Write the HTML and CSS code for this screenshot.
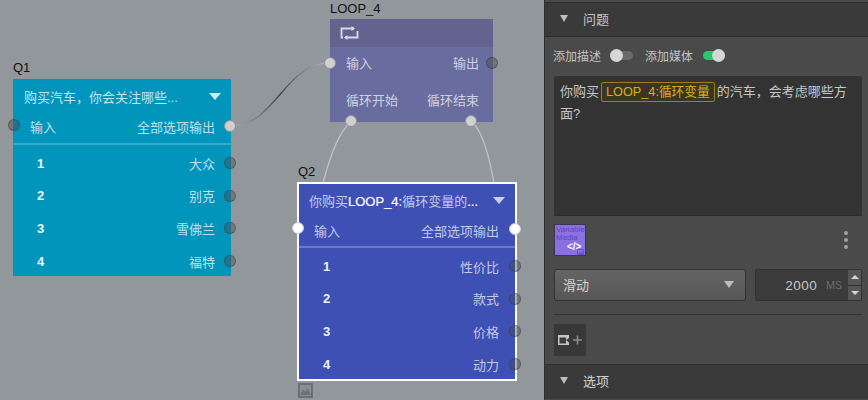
FILE: index.html
```html
<!DOCTYPE html>
<html lang="zh">
<head>
<meta charset="utf-8">
<title>Flow editor</title>
<link rel="stylesheet" href="styles.css">
</head>
<body>
<div class="app">
  <main class="canvas">
    <svg class="wires" width="544" height="400" viewBox="0 0 544 400">
      <defs>
        <linearGradient id="wg" gradientUnits="userSpaceOnUse" x1="230" y1="126" x2="330" y2="63">
          <stop offset="0" stop-color="#a9adb0"/>
          <stop offset="0.5" stop-color="#3f434c"/>
          <stop offset="1" stop-color="#b4b7ba"/>
        </linearGradient>
      </defs>
      <path d="M230 126C276 126 284 63 330 63" fill="none" stroke="url(#wg)" stroke-width="1.3"/>
      <path d="M351 122C338 132 329 160 323 183" fill="none" stroke="#c3c6c8" stroke-width="1.2"/>
      <path d="M471 122C482 128 490 160 494 183" fill="none" stroke="#c3c6c8" stroke-width="1.2"/>
    </svg>

    <section class="node node-q1">
      <div class="node-name">Q1</div>
      <div class="q-body q1-body">
        <div class="q-head"><span class="q-title">购买汽车，你会关注哪些...</span><span class="tri tri-head"></span></div>
        <div class="q-io"><span>输入</span><span>全部选项输出</span></div>
        <ul class="q-list">
          <li><b>1</b><span>大众</span><i class="port dim port-opt"></i></li>
          <li><b>2</b><span>别克</span><i class="port dim port-opt"></i></li>
          <li><b>3</b><span>雪佛兰</span><i class="port dim port-opt"></i></li>
          <li><b>4</b><span>福特</span><i class="port dim port-opt"></i></li>
        </ul>
        <i class="port dim port-in"></i>
        <i class="port light port-out"></i>
      </div>
    </section>

    <section class="node node-loop">
      <div class="node-name">LOOP_4</div>
      <div class="loop-body">
        <div class="loop-head">
          <svg width="19" height="14" viewBox="0 0 19 14" fill="none" stroke="#d9dbe6" stroke-width="1.8">
            <path d="M1.5 9V2.5H14"/><path d="M11.5 0 15 2.5 11.5 5" fill="#d9dbe6" stroke="none"/>
            <path d="M17.5 5v6.5H5"/><path d="M7.5 9 4 11.5 7.5 14" fill="#d9dbe6" stroke="none"/>
            <path d="M1.5 9v2.5H3"/>
          </svg>
        </div>
        <div class="loop-row"><span>输入</span><span>输出</span></div>
        <div class="loop-row loop-row-2"><span>循环开始</span><span>循环结束</span></div>
        <i class="port light lp-in"></i>
        <i class="port dim lp-out"></i>
        <i class="port light lp-start"></i>
        <i class="port light lp-end"></i>
      </div>
    </section>

    <section class="node node-q2">
      <div class="node-name">Q2</div>
      <div class="q-body q2-body">
        <div class="q-head"><span class="q-title">你购买<strong>LOOP_4:</strong>循环变量的<strong>...</strong></span><span class="tri tri-head"></span></div>
        <div class="q-io"><span>输入</span><span>全部选项输出</span></div>
        <ul class="q-list">
          <li><b>1</b><span>性价比</span><i class="port dim port-opt"></i></li>
          <li><b>2</b><span>款式</span><i class="port dim port-opt"></i></li>
          <li><b>3</b><span>价格</span><i class="port dim port-opt"></i></li>
          <li><b>4</b><span>动力</span><i class="port dim port-opt"></i></li>
        </ul>
        <i class="port white port-in"></i>
        <i class="port white port-out"></i>
      </div>
      <div class="media-badge">
        <svg width="11" height="9" viewBox="0 0 11 9"><path d="M0 9 3.5 3.5 5.5 6 7.5 2 11 9Z" fill="#6d7074"/></svg>
      </div>
    </section>
  </main>

  <aside class="panel">
    <header class="sec-head sec-top"><span class="tri tri-sec"></span><span>问题</span></header>
    <div class="sec-body">
      <div class="toggles">
        <span>添加描述</span><span class="switch off"><i></i></span>
        <span>添加媒体</span><span class="switch on"><i></i></span>
      </div>
      <div class="editor"><span>你购买</span><span class="token">LOOP_4:循环变量</span><span>的汽车，会考虑哪些方</span><br><span>面?</span></div>
      <div class="media-row">
        <div class="thumb">
          <span class="thumb-text">Variable<br>Media</span>
          <svg class="thumb-img" width="7" height="6" viewBox="0 0 7 6"><path d="M.5.5h6v5h-6Z" fill="none" stroke="#6a4fc8"/><path d="M1 5 3 2.500l1 1.500L5.500 2 6 5Z" fill="#6a4fc8"/></svg>
          <span class="thumb-code">&lt;/&gt;</span>
        </div>
        <div class="dots"><i></i><i></i><i></i></div>
      </div>
      <div class="controls">
        <div class="select"><span>滑动</span><span class="tri tri-sel"></span></div>
        <div class="stepper">
          <div class="num"><span class="val">2000</span><span class="unit">MS</span></div>
          <div class="arrows"><span class="up"></span><span class="down"></span></div>
        </div>
      </div>
      <div class="rule"></div>
      <button class="add-cam" type="button">
        <svg width="24" height="10" viewBox="0 0 24 10">
          <path d="M0 0h11v10H0Z" fill="#c4c4c4"/>
          <path d="M1.500 2.500h6.500v6H1.500Z" fill="#3c3c3c"/>
          <path d="M8 5 11 3v4.500Z" fill="#3c3c3c"/>
          <path d="M15 4.200h3.700V.500h1.600v3.700H24v1.600h-3.700v3.700h-1.600V5.800H15Z" fill="#8b8b8b"/>
        </svg>
      </button>
    </div>
    <header class="sec-head sec-bottom"><span class="tri tri-sec"></span><span>选项</span></header>
  </aside>
</div>
</body>
</html>
```
FILE: styles.css
```css
* { box-sizing: border-box; }
html, body { margin: 0; padding: 0; }
body {
  width: 868px; height: 400px; overflow: hidden;
  font-family: "Liberation Sans", "Noto Sans CJK SC", sans-serif;
  font-size: 13px; color: #ddd;
}
.app { display: flex; width: 868px; height: 400px; }

.canvas { position: relative; width: 544px; height: 400px; background: #92979c; flex: none; }
.wires { position: absolute; left: 0; top: 0; }
.node { position: absolute; }
.node-name { font-size: 13px; line-height: 15px; color: #111; }

.node-q1 { left: 13px; top: 60px; width: 218px; }
.node-loop { left: 330px; top: 1px; width: 163px; }
.node-q2 { left: 297px; top: 164px; width: 221px; }
.node-q2 .node-name { margin-left: 1px; }

.node-q1 .node-name { height: 19px; }
.node-loop .node-name { height: 18px; }
.node-q2 .node-name { height: 18px; }

.q-body { position: relative; }
.q1-body { height: 197px; background: #0295bc; }
.q2-body { height: 199px; background: #3e50b4; border: 2px solid #fff; width: 220px; }

.q-head { height: 34px; display: flex; align-items: center; justify-content: space-between; padding: 0 10px 0 11px; color: #c4e3ed; }
.q2-body .q-head { height: 33px; padding: 0 10px 0 10px; color: #c4cae8; }
.q-title { font-size: 13px; white-space: nowrap; }
.q-title strong { color: #fff; font-weight: 400; -webkit-text-stroke: 0.2px #fff; }
.q-io { height: 32px; padding: 0 16px 3px 17px; display: flex; align-items: center; justify-content: space-between; font-size: 13px; color: #bfe0ea; border-bottom: 2px solid #3aa9c9; }
.q2-body .q-io { height: 31px; padding: 0 16px 2px 15px; color: #c4cae8; border-bottom-color: #6b79c7; }

.q-list { list-style: none; margin: 0; padding: 2px 0 0; }
.q-list li { position: relative; height: 32.6px; display: flex; align-items: center; justify-content: space-between; padding: 0 16px 0 24px; color: #bfe0ea; }
.q2-body .q-list li { padding-left: 24px; color: #c4cae8; }
.q-list b { color: #eaf6fa; font-size: 13px; }

.port { position: absolute; display: block; width: 12px; height: 12px; border-radius: 50%; }
.port.dim { background: rgba(75, 75, 75, .42); border: 1px solid rgba(60, 60, 60, .5); }
.port.light { background: #d0d0d0; border: 1px solid #8f9396; }
.port.white { background: #fff; border: 1px solid #c8c8d8; }
.port-in { left: -5.5px; top: 40px; }
.port-out { right: -5px; top: 41px; }
.port-opt { right: -5px; top: 10px; }
.q2-body .port-in { left: -7px; top: 38px; }
.q2-body .port-out { right: -6px; top: 39px; }
.q2-body .port-opt { right: -6px; }

.tri { display: block; width: 0; height: 0; border-style: solid; border-color: transparent; border-bottom-width: 0; }
.tri-head { border-width: 7px 6px 0; border-top-color: #d4e8f0; }
.q2-body .tri-head { border-top-color: #c9cee9; }

.loop-body { position: relative; height: 103px; background: #696c9f; }
.loop-head { height: 28px; background: #62638f; display: flex; align-items: center; padding-left: 10px; }
.loop-row { height: 31px; display: flex; align-items: center; justify-content: space-between; padding: 0 14px 0 16px; font-size: 13px; color: #d0d1e0; }
.loop-row-2 { margin-top: 6px; }
.lp-in { left: -6px; top: 38px; }
.lp-out { right: -5px; top: 38px; }
.lp-start { left: 15px; bottom: -5px; }
.lp-end { right: 16px; bottom: -5px; }

.media-badge { position: absolute; left: 1px; top: 219px; width: 15px; height: 15px; border: 2px solid #6c7074; background: #8a8e92; display: flex; align-items: center; justify-content: center; }

.panel { width: 324px; height: 400px; flex: none; background: #4a4a4a; border-left: 1px solid #2f2f2f; display: flex; flex-direction: column; }
.sec-head { display: flex; align-items: center; gap: 15px; padding-left: 15px; background: #3a3a3a; color: #c4c4c4; font-size: 13px; }
.sec-top { height: 35px; margin-top: 2px; padding-bottom: 2px; border-top: 1px solid #2f2f2f; border-bottom: 1px solid #2a2a2a; }
.sec-bottom { height: 35px; margin: auto 0 1px; padding-bottom: 3px; border-top: 1px solid #2f2f2f; color: #d2d2d2; }
.tri-sec { border-width: 7px 4.5px 0; border-top-color: #bdbdbd; }

.sec-body { padding: 0 5px 0 9px; flex: 1; display: flex; flex-direction: column; }
.toggles { display: flex; align-items: center; height: 39px; margin-left: -1px; padding-bottom: 2px; font-size: 12px; color: #c3c3c3; }
.switch { position: relative; display: block; width: 23px; height: 9px; border-radius: 4.5px; margin: 0 12px 0 9px; background: #6a6a6a; }
.switch i { position: absolute; top: -2px; width: 13px; height: 13px; border-radius: 50%; background: #d6d6d6; }
.switch.off i { left: 0; }
.switch.on { width: 22px; background: #2ac769; margin-left: 10px; }
.switch.on i { right: 0; }

.editor { width: 308px; height: 139px; background: #333; border-radius: 2px; padding: 5px 10px 0 6px; font-size: 13px; line-height: 22px; color: #c6c6c6; box-shadow: 0 1px 0 #2b2b2b; }
.token { display: inline-block; line-height: 18px; padding: 0 4px; margin: 0 2px; border: 1px solid #a07e15; border-radius: 2px; background: #3a3626; color: #dcae12; font-size: 12.7px; }

.media-row { display: flex; justify-content: space-between; align-items: center; height: 32px; margin-top: 9px; width: 308px; }
.thumb { position: relative; width: 32px; height: 32px; background: #8a70e0; border: 1px solid #3a3550; overflow: hidden; }
.thumb-text { position: absolute; left: 1px; top: 1px; font-size: 8px; line-height: 8px; color: #6045c4; }
.thumb-code { position: absolute; left: 12px; top: 17px; font-size: 10px; line-height: 9px; font-weight: 700; color: #fff; }
.thumb-img { position: absolute; right: 1px; bottom: 0; }
.dots { display: flex; flex-direction: column; gap: 2.5px; margin-right: 14px; }
.dots i { display: block; width: 4.5px; height: 4.5px; border-radius: 50%; background: #a2a2a2; }

.controls { display: flex; justify-content: space-between; height: 32px; margin-top: 13px; width: 308px; }
.select { width: 192px; height: 32px; background: linear-gradient(#646464, #575757); border: 1px solid #333; border-radius: 3px; display: flex; align-items: center; justify-content: space-between; padding: 0 11px 1px 8px; color: #d2d2d2; font-size: 13px; }
.tri-sel { border-width: 7px 5.5px 0; border-top-color: #bcbcbc; }
.stepper { width: 107px; height: 32px; background: #3b3b3b; border: 1px solid #333; border-radius: 2px; display: flex; }
.num { flex: 1; display: flex; align-items: center; justify-content: flex-end; gap: 9px; padding-right: 6px; }
.val { color: #c8c8c8; font-size: 13.5px; letter-spacing: .5px; }
.unit { color: #6d6d6d; font-size: 10.5px; }
.arrows { width: 13px; display: flex; flex-direction: column; background: #2f2f2f; gap: 1px; }
.arrows span { flex: 1; background: #565656; display: flex; align-items: center; justify-content: center; }
.arrows span::after { content: ""; width: 0; height: 0; border-style: solid; border-color: transparent; }
.arrows .up::after { border-width: 0 4px 4px; border-bottom-color: #d5d5d5; }
.arrows .down::after { border-width: 4px 4px 0; border-top-color: #d5d5d5; }

.rule { width: 308px; height: 1px; background: #333; margin-top: 13px; }
.add-cam { width: 32px; height: 32px; margin-top: 9px; padding: 0 0 0 4px; background: #383838; border: 0; border-radius: 1px; display: flex; align-items: center; }
```
